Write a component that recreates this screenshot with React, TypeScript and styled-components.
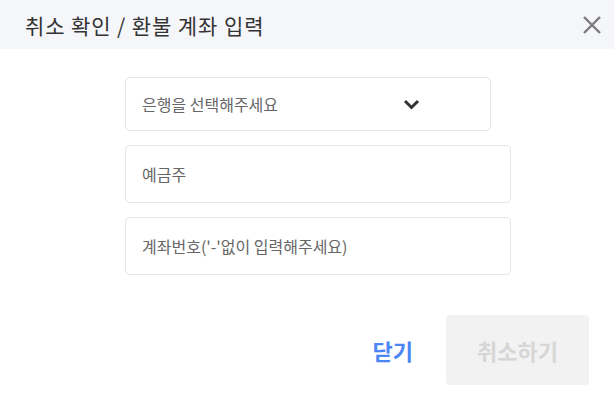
import { createGlobalStyle } from 'styled-components';
import styled from 'styled-components';

const GlobalStyle = createGlobalStyle`
    body {
        margin: 0;
        background: #ffffff;
        font-family: "Noto Sans CJK KR", "Noto Sans", sans-serif;
    }
`;

const Dialog = styled.div`
    width: 614px;
    height: 409px;
    display: flex;
    flex-direction: column;
    background: #ffffff;
`;

const Header = styled.div`
    height: 49px;
    flex-shrink: 0;
    display: flex;
    align-items: center;
    justify-content: space-between;
    padding: 0 11px 0 25px;
    background: #f5f6f9;
`;

const Title = styled.h1`
    margin: 0;
    font-size: 21px;
    font-weight: 400;
    color: #333333;
    letter-spacing: 0.9px;
`;

const CloseButton = styled.button`
    width: 22px;
    height: 22px;
    padding: 0;
    border: 0;
    background: none;
    display: flex;
    align-items: center;
    justify-content: center;
    cursor: pointer;
`;

const Body = styled.div`
    display: flex;
    flex-direction: column;
    gap: 14px;
    padding: 28px 0 0 125px;
`;

const Field = styled.div<{ $width: number; $height: number }>`
    box-sizing: border-box;
    width: ${(p) => p.$width}px;
    height: ${(p) => p.$height}px;
    display: flex;
    align-items: center;
    justify-content: space-between;
    padding: 0 70px 0 16px;
    border: 1px solid #e6e6e6;
    border-radius: 4px;
    font-size: 16px;
    color: #666666;
`;

const Footer = styled.div`
    display: flex;
    align-items: center;
    justify-content: flex-end;
    gap: 33px;
    margin-top: auto;
    padding: 0 25px 24px 0;
`;

const TextButton = styled.button`
    border: 0;
    background: none;
    padding: 0;
    font-family: inherit;
    font-size: 22px;
    font-weight: 700;
    color: #4b86f6;
    cursor: pointer;
`;

const SubmitButton = styled.button`
    width: 143px;
    height: 70px;
    border: 0;
    border-radius: 4px;
    background: #f2f2f2;
    font-family: inherit;
    font-size: 22px;
    font-weight: 700;
    color: #d6d6d6;
`;

export default function App() {
    return (
        <Dialog>
            <GlobalStyle />
            <Header>
                <Title>취소 확인 / 환불 계좌 입력</Title>
                <CloseButton>
                    <svg width="20" height="20" viewBox="0 0 20 20">
                        <path d="M2 2 L18 18 M18 2 L2 18" stroke="#7a7a7a" strokeWidth="2.4" />
                    </svg>
                </CloseButton>
            </Header>
            <Body>
                <Field $width={366} $height={54}>
                    은행을 선택해주세요
                    <svg width="17" height="11" viewBox="0 0 17 11">
                        <path d="M2 2 L8.5 8.5 L15 2" stroke="#333" strokeWidth="3" fill="none" />
                    </svg>
                </Field>
                <Field $width={386} $height={58}>예금주</Field>
                <Field $width={386} $height={58}>계좌번호('-'없이 입력해주세요)</Field>
            </Body>
            <Footer>
                <TextButton>닫기</TextButton>
                <SubmitButton disabled>취소하기</SubmitButton>
            </Footer>
        </Dialog>
    );
}
